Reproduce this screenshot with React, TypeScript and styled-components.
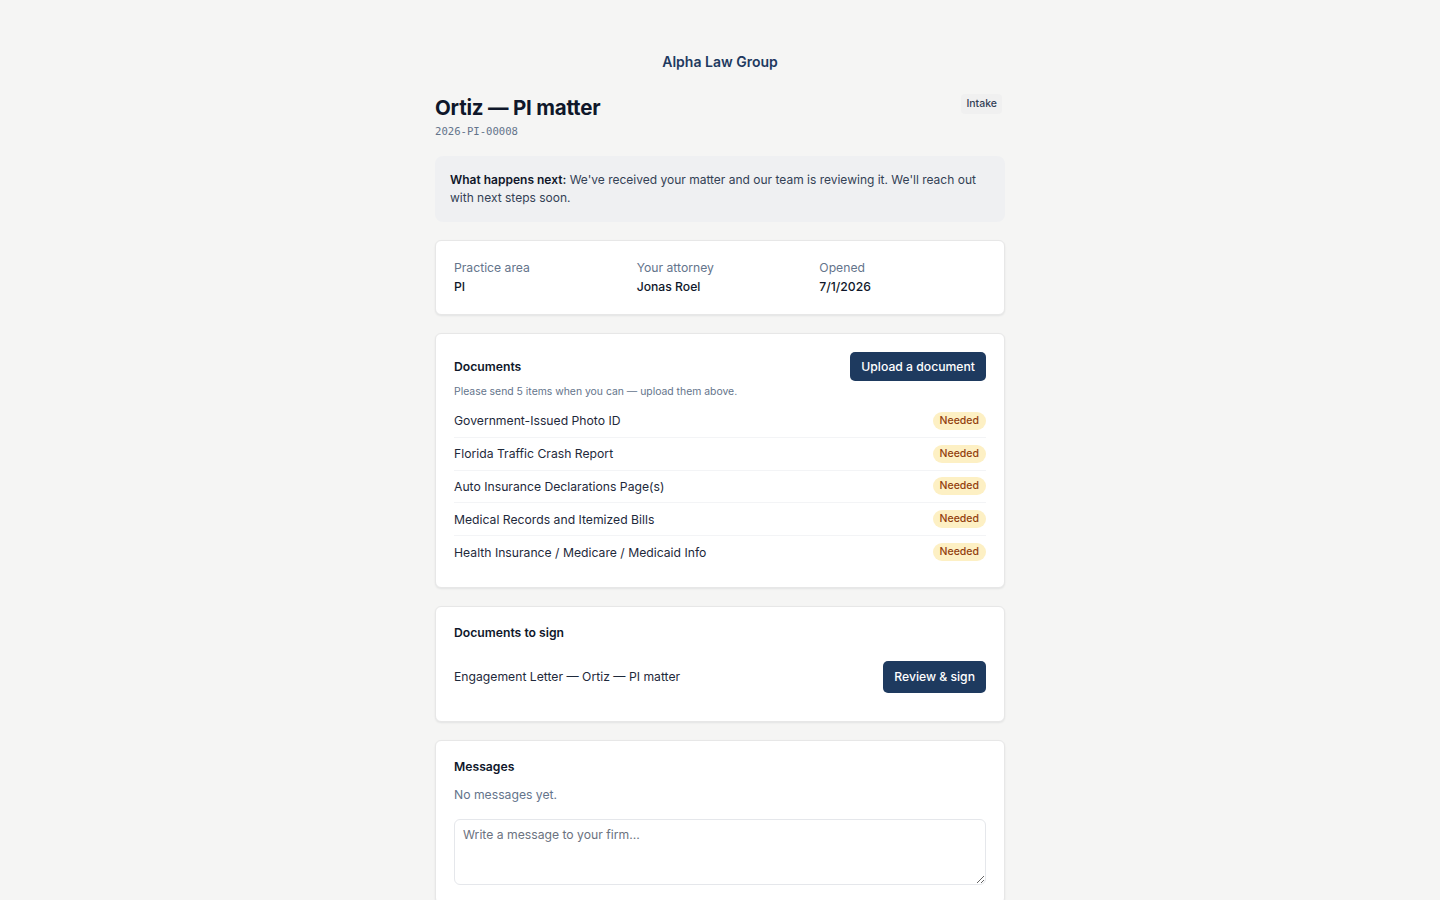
import React from "react";
import styled, { createGlobalStyle } from "styled-components";

const GlobalStyle = createGlobalStyle`
  * { box-sizing: border-box; }
  body {
    margin: 0;
    background: #f5f5f4;
    font-family: Inter, "Noto Sans", "Liberation Sans", sans-serif;
    color: #0f172a;
  }
`;

const Page = styled.div`
  width: 570px;
  margin: 0 auto;
  padding: 52px 0 40px;
`;

const FirmName = styled.div`
  text-align: center;
  font-size: 14px;
  font-weight: 600;
  color: #1e3a5f;
  line-height: 20px;
`;

const MatterHeader = styled.div`
  display: flex;
  justify-content: space-between;
  align-items: flex-start;
  margin-top: 22px;
`;

const MatterTitle = styled.h1`
  margin: 0;
  font-size: 20.5px;
  font-weight: 700;
  line-height: 28px;
  letter-spacing: -0.2px;
  color: #0f172a;
`;

const MatterNumber = styled.div`
  margin-top: 2px;
  font-family: "DejaVu Sans Mono", "Liberation Mono", monospace;
  font-size: 10.6px;
  color: #64748b;
  line-height: 14px;
`;

const StageBadge = styled.span`
  margin: 0 3px 0 0;
  padding: 3px 5px;
  border-radius: 4px;
  background: #f0f0f0;
  font-size: 10.5px;
  font-weight: 500;
  color: #334155;
  line-height: 14px;
`;

const NextStep = styled.div`
  margin-top: 18px;
  padding: 15px 15px;
  background: #eff0f2;
  border-radius: 8px;
  font-size: 12px;
  line-height: 18px;
  color: #334155;

  strong {
    font-weight: 600;
    color: #0f172a;
  }
`;

const Card = styled.section`
  margin-top: 18px;
  padding: 18px;
  background: #fff;
  border: 1px solid #e7e7e7;
  border-radius: 6px;
  box-shadow: 0 1px 2px rgba(15, 23, 42, 0.08);
`;

const Facts = styled.div`
  display: grid;
  grid-template-columns: repeat(3, 1fr);
  column-gap: 16px;
`;

const FactLabel = styled.div`
  font-size: 12.2px;
  color: #64748b;
  line-height: 18px;
`;

const FactValue = styled.div`
  margin-top: 1px;
  font-size: 12.2px;
  font-weight: 500;
  color: #0f172a;
  line-height: 18px;
`;

const CardHead = styled.div`
  display: flex;
  justify-content: space-between;
  align-items: center;
`;

const CardTitle = styled.h2`
  margin: 0;
  font-size: 12.2px;
  font-weight: 600;
  line-height: 16px;
  color: #0f172a;
`;

const PrimaryButton = styled.button<{ $tall?: boolean }>`
  height: ${(p) => (p.$tall ? "32px" : "29px")};
  padding: 0 11px;
  border: none;
  border-radius: 5px;
  background: #1e3a5f;
  color: #fff;
  font-family: inherit;
  font-size: 12.2px;
  font-weight: 500;
  cursor: pointer;
`;

const Hint = styled.p`
  margin: 3px 0 5px;
  font-size: 10.4px;
  line-height: 16px;
  color: #64748b;
`;

const DocRow = styled.div`
  display: flex;
  justify-content: space-between;
  align-items: center;
  height: 32.75px;
  border-bottom: 1px solid #f3f4f6;
  font-size: 12.2px;
  color: #1e293b;

  &:last-child {
    border-bottom: none;
  }
`;

const NeededBadge = styled.span`
  padding: 2px 7px;
  border-radius: 999px;
  background: #fdf0c4;
  color: #92400e;
  font-size: 10.5px;
  font-weight: 500;
  line-height: 14px;
`;

const SignRow = styled.div`
  display: flex;
  justify-content: space-between;
  align-items: center;
  margin-top: 12px;
  padding: 8px 0 10px;
  font-size: 12.2px;
  color: #1e293b;
`;

const EmptyNote = styled.p`
  margin: 10px 0 0;
  font-size: 12.2px;
  line-height: 20px;
  color: #64748b;
`;

const MessageBox = styled.textarea`
  display: block;
  width: 100%;
  height: 66px;
  margin-top: 14px;
  padding: 6px 8px;
  border: 1px solid #e5e7eb;
  border-radius: 6px;
  font-family: inherit;
  font-size: 12.2px;
  line-height: 18px;
  color: #0f172a;
  resize: vertical;

  &::placeholder {
    color: #6b7280;
  }
`;

const documents = [
  "Government-Issued Photo ID",
  "Florida Traffic Crash Report",
  "Auto Insurance Declarations Page(s)",
  "Medical Records and Itemized Bills",
  "Health Insurance / Medicare / Medicaid Info",
];

const App = () => {
  return (
    <>
      <GlobalStyle />
      <Page>
        <FirmName>Alpha Law Group</FirmName>

        <MatterHeader>
          <div>
            <MatterTitle>Ortiz — PI matter</MatterTitle>
            <MatterNumber>2026-PI-00008</MatterNumber>
          </div>
          <StageBadge>Intake</StageBadge>
        </MatterHeader>

        <NextStep>
          <strong>What happens next:</strong> We've received your matter and our team is
          reviewing it. We'll reach out with next steps soon.
        </NextStep>

        <Card>
          <Facts>
            <div>
              <FactLabel>Practice area</FactLabel>
              <FactValue>PI</FactValue>
            </div>
            <div>
              <FactLabel>Your attorney</FactLabel>
              <FactValue>Jonas Roel</FactValue>
            </div>
            <div>
              <FactLabel>Opened</FactLabel>
              <FactValue>7/1/2026</FactValue>
            </div>
          </Facts>
        </Card>

        <Card>
          <CardHead>
            <CardTitle>Documents</CardTitle>
            <PrimaryButton>Upload a document</PrimaryButton>
          </CardHead>
          <Hint>Please send 5 items when you can — upload them above.</Hint>
          {documents.map((doc) => (
            <DocRow key={doc}>
              <span>{doc}</span>
              <NeededBadge>Needed</NeededBadge>
            </DocRow>
          ))}
        </Card>

        <Card>
          <CardTitle>Documents to sign</CardTitle>
          <SignRow>
            <span>Engagement Letter — Ortiz — PI matter</span>
            <PrimaryButton $tall>Review &amp; sign</PrimaryButton>
          </SignRow>
        </Card>

        <Card>
          <CardTitle>Messages</CardTitle>
          <EmptyNote>No messages yet.</EmptyNote>
          <MessageBox placeholder="Write a message to your firm…" />
        </Card>
      </Page>
    </>
  );
};

export default App;
